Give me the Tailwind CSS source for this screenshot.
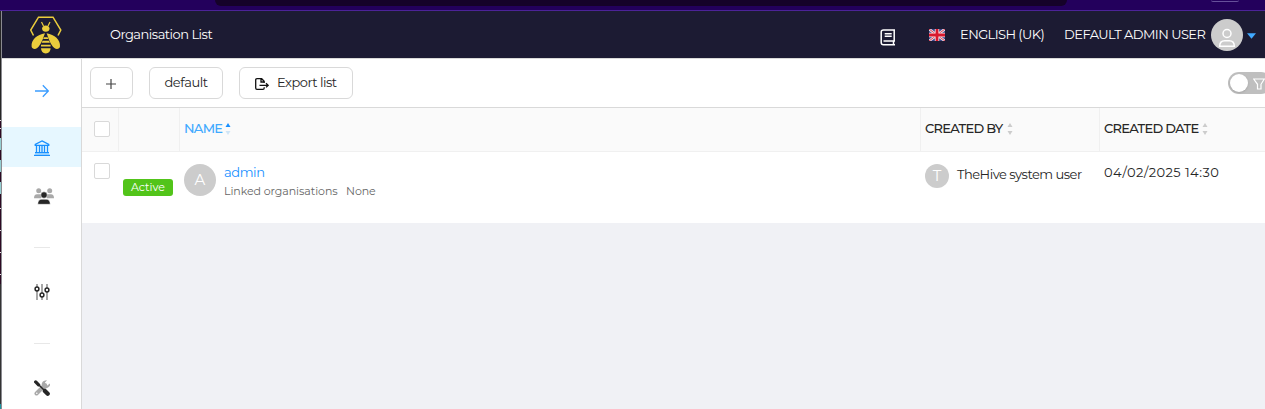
<!DOCTYPE html>
<html lang="en">
<head>
<meta charset="utf-8">
<title>Organisation List</title>
<script src="https://cdn.jsdelivr.net/npm/@tailwindcss/browser@4"></script>
</head>
<body class="w-[1265px] h-[409px] overflow-hidden bg-[#f0f1f5] font-['Montserrat','Inter',sans-serif] text-[13px] tracking-[-0.5px] text-[#262626] flex flex-col">
<div class="h-[11px] shrink-0 bg-[#23005c] border-b border-[#4c2398] pl-[215px] flex">
  <div class="w-[852px] h-[6px] bg-[#150229] rounded-b-lg"></div>
  <div class="ml-[144px] w-[28px] h-[2px] rounded-b border-b border-[#66509a]"></div>
</div>
<div class="flex flex-1 min-h-0">
  <div class="w-px shrink-0 flex flex-col">
    <div class="h-[109px] bg-[#252525]"></div>
    <div class="h-px bg-[#e5dfe4]"></div>
    <div class="h-[7px] bg-[#2d0922]"></div>
    <div class="h-px bg-[#e5dfe4]"></div>
    <div class="h-[9px] bg-[#2d0922]"></div>
    <div class="h-[12px] bg-[#95cfd2]"></div>
    <div class="h-[10px] bg-[#2d0922]"></div>
    <div class="h-[12px] bg-[#95cfd2]"></div>
    <div class="h-[10px] bg-[#2d0922]"></div>
    <div class="h-[12px] bg-[#95cfd2]"></div>
    <div class="h-[15px] bg-[#2d0922] border-b border-[#e5dfe4]"></div>
    <div class="h-[22px] bg-[#2d0922] border-b border-[#e5dfe4]"></div>
    <div class="h-[22px] bg-[#2d0922] border-b border-[#e5dfe4]"></div>
    <div class="h-[22px] bg-[#2d0922] border-b border-[#e5dfe4]"></div>
    <div class="h-[9px] bg-[#2d0922]"></div>
    <div class="flex-1 bg-[#333]"></div>
    <div class="h-[5px] bg-[#1b95a0]"></div>
  </div>
  <div class="w-px shrink-0 bg-[#8a8a90]"></div>
  <div class="flex-1 min-w-0 flex flex-col">
    <header class="h-[48px] shrink-0 bg-[#1c1b33] border-b border-[#d9d9d9] text-white flex items-center whitespace-nowrap">
      <svg class="ml-[27px] w-[34px] h-[38px] shrink-0" viewBox="0 0 34 38" fill="#ebcd3c">
        <path d="M4.500 19.500 1.700 14 9.500 1.200h14.500L31.800 14 29 19.500" fill="none" stroke="#ebcd3c" stroke-width="1.500"/>
        <path d="M12.500 6 14.500 10M21 6 19 10" fill="none" stroke="#ebcd3c" stroke-width="1.200"/>
        <path d="M13 12.500q.5-3 3.800-3t3.800 3q-.4 3.300-3.800 3.300t-3.800-3.300zM16 17.300C8 18.500 2 24 2.600 30.500c.3 2.500 3.500 3.300 5.600 1.500C12 29 14.300 22 16 17.300zM17.600 17.300c8 1.200 14 6.700 13.400 13.200-.3 2.500-3.500 3.300-5.600 1.500-3.800-3-6.100-10-7.800-14.700z"/>
        <path d="M15 21.300h3.600l.8 1.700h-5.200zM13.600 24.800H20l.9 1.900h-8.200zM12 28.700h9.600v1.700H12zM12 32.300h9.600q-.2 5-4.800 5.200-4.600-.2-4.800-5.200z"/>
      </svg>
      <span class="ml-[47px] w-[680px] shrink-0">Organisation List</span>
      <svg class="ml-[90px] mt-[5px] w-[16px] h-[17px] shrink-0" viewBox="0 0 16 17" fill="none" stroke="#fff" stroke-width="1.500"><path d="M15 12H3.500M15 .9H3.500Q1.200.9 1.200 3v10.500q0 2.300 2.300 2.300H15M14.200.9V12M13.500 12v3.500M4.700 4.700h7M4.700 7.200h7"/></svg>
      <svg class="ml-[33px] w-[16px] h-[12px] shrink-0" viewBox="0 0 16 12"><path fill="#35468c" d="M0 0h16v12H0z"/><path d="m0 0 16 12M16 0 0 12" stroke="#f2dfe4" stroke-width="2.600"/><path d="m0 0 16 12M16 0 0 12" stroke="#d84255" stroke-width="1"/><path d="M8 0v12M0 6h16" stroke="#f6e6ea" stroke-width="4.400"/><path d="M8 0v12M0 6h16" stroke="#d8192f" stroke-width="2.800"/></svg>
      <span class="ml-[15px] w-[104px] shrink-0 tracking-[-0.57px]">ENGLISH (UK)</span>
      <span class="w-[147px] shrink-0 tracking-[-0.53px]">DEFAULT ADMIN USER</span>
      <div class="w-[32px] h-[32px] rounded-full bg-[#ccc] shrink-0 flex justify-center">
        <svg class="w-[18px] h-[20px] mt-[9px]" viewBox="0 0 18 20" fill="none" stroke="#fff" stroke-width="1.500"><circle cx="9" cy="5.500" r="4"/><path d="M1.700 18.200q0-5.500 5-5.500h4.600q5 0 5 5.500z"/></svg>
      </div>
      <svg class="ml-[4px] mt-[2px] w-[9px] h-[6px] shrink-0" viewBox="0 0 9 6" fill="#40a9ff"><path d="M0 .3h9L4.500 5.700z"/></svg>
    </header>
    <div class="flex flex-1 min-h-0">
      <nav class="w-[80px] shrink-0 bg-white border-r border-[#d9d9d9] flex flex-col items-center">
        <div class="h-[68px] pt-[25px]"><svg class="w-[14px] h-[14px]" viewBox="0 0 14 14" fill="none" stroke="#3b9dff" stroke-width="1.300"><path d="M0 7h13.300M7.800 1.300 13.300 7l-5.500 5.700"/></svg></div>
        <div class="w-full h-[40px] bg-[#e6f7ff] flex justify-center pt-[13px]"><svg class="w-[16px] h-[16px]" viewBox="0 0 16 16" fill="none" stroke="#1890ff"><path d="m8 .9 6.800 3.500v1H1.200v-1z" stroke-width="1.200"/><path d="M2.500 6v6M5.500 6v6M8 6v6M10.500 6v6M13.500 6v6" stroke-width="1.300"/><path d="M1 12.500h14M0 15.400h16" stroke-width="1.100"/><path d="M1 13h14v2H1z" fill="#91ceff" stroke="none"/></svg></div>
        <div class="h-[80px] pt-[21px]"><svg class="w-[20px] h-[17px] ml-[4px]" viewBox="0 0 20 17" fill="#a9a9a9"><circle cx="4.700" cy="2.700" r="2.500"/><circle cx="15.700" cy="2.700" r="2.500"/><path d="M0 10.200q0-4 3-4h4v4zM20 10.200q0-4-3-4h-4v4z"/><g fill="#262626" stroke="#fff" stroke-width=".5"><circle cx="10" cy="7" r="3.200"/><path d="M3.800 16.300q0-5 4-5h4.400q4 0 4 5z"/></g></svg></div>
        <div class="w-[16px] h-px bg-[#e8e8e8]"></div>
        <div class="h-[95px] pt-[36px]"><svg class="w-[16px] h-[16px]" viewBox="0 0 16 16" fill="none"><path d="M3 0v16M8 0v16M13 0v16" stroke="#999" stroke-width="1.700"/><g fill="#fff" stroke="#262626" stroke-width="1.500"><circle cx="3" cy="5" r="1.900"/><circle cx="8" cy="11" r="1.900"/><circle cx="13" cy="6" r="1.900"/></g></svg></div>
        <div class="w-[16px] h-px bg-[#e8e8e8]"></div>
        <div class="pt-[36px]"><svg class="w-[16px] h-[16px]" viewBox="0 0 16 16" fill="none"><path d="m2.500 13.500 8.500-8.500" stroke="#a9a9a9" stroke-width="4" stroke-linecap="round"/><path d="M13 .3Q9 .3 8 3T9 7.500t5 0 1.800-4L13.300 5.500 11 4.700V2.500z" fill="#a9a9a9"/><circle cx="2.800" cy="13.300" r=".8" fill="#fff"/><path d="M1.700 1.900 4.600 4.800" stroke="#262626" stroke-width="3.300" stroke-linecap="round"/><path d="m5 5 6 6" stroke="#262626" stroke-width="1.500"/><path d="m10.900 10.900 2.800 2.800" stroke="#262626" stroke-width="4.300" stroke-linecap="round"/></svg></div>
      </nav>
      <main class="flex-1 min-w-0 flex flex-col whitespace-nowrap">
        <div class="h-[49px] shrink-0 bg-white border-b border-[#d9d9d9] flex items-center pl-[8px] gap-[16px]">
          <button class="w-[43px] h-[32px] shrink-0 rounded-md border border-[#d9d9d9] flex items-center justify-center"><svg class="mr-px w-[10px] h-[10px] mt-[2px]" viewBox="0 0 10 10" stroke="#444" stroke-width="1.200"><path d="M0 5h10M5 0v10"/></svg></button>
          <button class="w-[74px] h-[32px] shrink-0 rounded-md border border-[#d9d9d9] tracking-[-0.4px]">default</button>
          <button class="w-[114px] h-[32px] shrink-0 rounded-md border border-[#d9d9d9] flex items-center pl-[15px] gap-[8px]"><svg class="w-[14px] h-[12px] mt-[2px] shrink-0" viewBox="0 0 14 12" fill="none" stroke="#111" stroke-width="1.300"><path d="M9.200 5V3.200L6.700.7H2Q.7.700.7 2v8q0 1.300 1.300 1.300h6q1.200 0 1.200-1.200V9.300M6 .7V4h3.200M4.500 7.300H13M11 5.200l2.200 2.100L11 9.400"/></svg><span>Export list</span></button>
          <div class="ml-[859px] w-[44px] h-[22px] rounded-full bg-[#bfbfbf] shrink-0 flex items-center pl-[2px]"><div class="w-[18px] h-[18px] rounded-full bg-white shadow-sm"></div><svg class="ml-[5px] mt-[2px] w-[12px] h-[12px] shrink-0" viewBox="0 0 12 12" fill="none" stroke="#fff" stroke-width="1.200"><path d="M.7 1h10.600L8 6.300V11H4.500V6.300z"/></svg></div>
        </div>
        <div class="h-[44px] shrink-0 bg-[#fafafa] border-b border-[#f0f0f0] flex font-medium tracking-[-0.72px]">
          <div class="w-[37px] shrink-0 border-r border-[#f0f0f0] pl-[12px] pt-[13px]"><div class="w-[16px] h-[16px] rounded-[2px] border border-[#d9d9d9] bg-white"></div></div>
          <div class="w-[61px] shrink-0 border-r border-[#f0f0f0]"></div>
          <div class="w-[741px] shrink-0 border-r border-[#f0f0f0] pl-[4px] flex items-center pb-px text-[#40a9ff]"><span class="w-[41px]">NAME</span><svg class="w-[6px] h-[12px] mb-px" viewBox="0 0 6 12"><path d="M.5 4 3 0l2.500 4z" fill="#1890ff"/><path d="M.5 8h5L3 12z" fill="#cfe5f6"/></svg></div>
          <div class="w-[179px] shrink-0 border-r border-[#f0f0f0] pl-[4px] flex items-center pb-px"><span class="w-[82px]">CREATED BY</span><svg class="w-[6px] h-[12px] mb-px" viewBox="0 0 6 12" fill="#ccc"><path d="M.5 4 3 0l2.500 4zM.5 8h5L3 12z"/></svg></div>
          <div class="pl-[4px] flex items-center pb-px"><span class="w-[98px]">CREATED DATE</span><svg class="w-[6px] h-[12px] mb-px" viewBox="0 0 6 12" fill="#ccc"><path d="M.5 4 3 0l2.500 4zM.5 8h5L3 12z"/></svg></div>
        </div>
        <div class="h-[71px] shrink-0 bg-white flex">
          <div class="w-[41px] shrink-0 pl-[12px] pt-[11px]"><div class="w-[16px] h-[16px] rounded-[2px] border border-[#d9d9d9]"></div></div>
          <div class="w-[61px] shrink-0 pt-[27px]"><div class="w-[50px] h-[17px] rounded-[3px] bg-[#52c41a] text-white text-[11px] leading-[17px] text-center tracking-normal">Active</div></div>
          <div class="w-[741px] shrink-0 pt-[12px] flex">
            <div class="w-[32px] h-[32px] rounded-full bg-[#ccc] text-white text-[15px] leading-[32px] text-center tracking-normal">A</div>
            <div class="pl-[8px] -mt-px"><div class="text-[#1890ff] leading-[18px] mb-[2px] tracking-[-0.4px]">admin</div><div class="text-[11px] leading-[17px] text-[#666] flex tracking-[-0.06px]"><span class="w-[122px]">Linked organisations</span><span>None</span></div></div>
          </div>
          <div class="w-[179px] shrink-0 pt-[12px] flex"><div class="w-[24px] h-[24px] rounded-full bg-[#ccc] text-white text-[15px] leading-[24px] text-center tracking-normal">T</div><span class="ml-[8px] -mt-px leading-[22px]">TheHive system user</span></div>
          <div class="pt-[9px] leading-[22px] tracking-[0.43px]">04/02/2025 14:30</div>
        </div>
      </main>
    </div>
  </div>
</div>
</body>
</html>
